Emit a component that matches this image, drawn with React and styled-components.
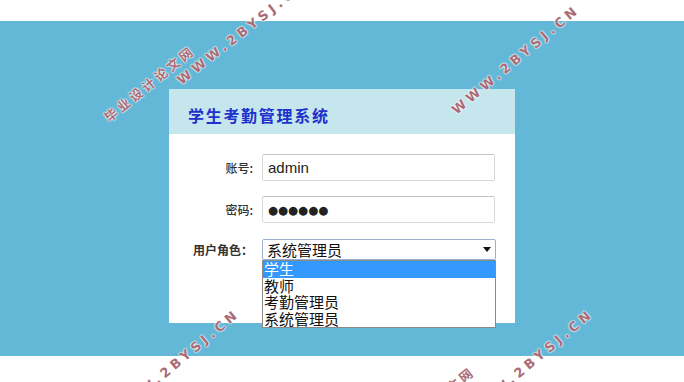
import React from 'react';
import styled, { createGlobalStyle } from 'styled-components';

const GlobalStyle = createGlobalStyle`
    html, body {
        margin: 0;
        padding: 0;
        background: #ffffff;
        font-family: "Liberation Sans", "Noto Sans CJK SC", sans-serif;
    }
`;

const roles = ['学生', '教师', '考勤管理员', '系统管理员'];

// watermark stamps, anchored at the left edge / vertical middle of the first glyph
const marks = [
    { text: '毕业设计论文网', x: 106, y: 119, deg: -39, cjk: true },
    { text: 'WWW.2BYSJ.CN', x: 179, y: 82, deg: -38 },
    { text: 'WWW.2BYSJ.CN', x: 454, y: 112, deg: -40 },
    { text: 'WWW.2BYSJ.CN', x: 114, y: 416, deg: -40 },
    { text: '毕业设计论文网', x: 386, y: 440, deg: -39, cjk: true },
    { text: 'WWW.2BYSJ.CN', x: 468, y: 416, deg: -40 },
];

function App() {
    return (
        <Page>
            <GlobalStyle />
            <Band>
                <Card>
                    <Header>
                        <Title>学生考勤管理系统</Title>
                    </Header>
                    <Form>
                        <Row>
                            <Label>账号:</Label>
                            <Input type="text" value="admin" readOnly />
                        </Row>
                        <Row>
                            <Label>密码:</Label>
                            <Input type="text" value="●●●●●●" readOnly $mask />
                        </Row>
                        <Row $top>
                            <Label $bold>用户角色：</Label>
                            <SelectWrap>
                                <SelectBox>
                                    <span>系统管理员</span>
                                    <Caret viewBox="0 0 8 5">
                                        <path d="M0 0 H8 L4 5 Z" fill="#111" />
                                    </Caret>
                                </SelectBox>
                                <ListBox>
                                    {roles.map((r, i) => (
                                        <Option key={r} $active={i === 0}>
                                            {r}
                                        </Option>
                                    ))}
                                </ListBox>
                            </SelectWrap>
                        </Row>
                    </Form>
                </Card>
            </Band>
            {marks.map((m, i) => (
                <Mark
                    key={i}
                    $cjk={m.cjk}
                    style={{ left: m.x, top: m.y - 8, transform: `rotate(${m.deg}deg)` }}
                >
                    {m.text}
                </Mark>
            ))}
        </Page>
    );
}
export default App;

const Page = styled.div`
    position: relative;
    width: 684px;
    height: 382px;
    overflow: hidden;
    padding-top: 21px;
    box-sizing: border-box;
`;

const Band = styled.div`
    height: 335px;
    background: #63b8d7;
    padding-top: 68px;
    box-sizing: border-box;
`;

const Card = styled.div`
    width: 346px;
    height: 234px;
    margin: 0 auto;
    background: #ffffff;
`;

const Header = styled.div`
    height: 45px;
    background: #c6e6ed;
    display: flex;
    align-items: center;
    padding: 7px 0 0 19px;
    box-sizing: border-box;
`;

const Title = styled.h1`
    margin: 0;
    font-family: "Noto Sans CJK SC", sans-serif;
    font-size: 16px;
    font-weight: 700;
    letter-spacing: 1.7px;
    color: #2030cc;
`;

const Form = styled.div`
    display: flex;
    flex-direction: column;
    gap: 15px;
    padding-top: 20px;
`;

const Row = styled.div`
    display: flex;
    align-items: ${(p) => (p.$top ? 'flex-start' : 'center')};
    height: 27px;
    padding-top: ${(p) => (p.$top ? '1px' : '0')};
`;

const Label = styled.label`
    width: 93px;
    text-align: right;
    padding-right: 9px;
    box-sizing: border-box;
    font-family: "Noto Sans CJK SC", sans-serif;
    font-size: 12px;
    line-height: 21px;
    font-weight: ${(p) => (p.$bold ? 700 : 500)};
    color: #333;
`;

const Input = styled.input`
    width: 233px;
    height: 27px;
    box-sizing: border-box;
    border: 1px solid #d8d8d8;
    border-top-color: #c4c4c4;
    border-radius: 2px;
    padding: 0 5px;
    font-family: ${(p) => (p.$mask ? '"DejaVu Sans", sans-serif' : '"Liberation Sans", sans-serif')};
    font-size: ${(p) => (p.$mask ? '11.5px' : '15px')};
    color: #222;
    outline: none;
`;

const SelectWrap = styled.div`
    position: relative;
    width: 234px;
`;

const SelectBox = styled.div`
    height: 21px;
    box-sizing: border-box;
    border: 1px solid #9bb0cf;
    border-radius: 2px;
    display: flex;
    align-items: center;
    justify-content: space-between;
    padding: 0 4px 0 4px;
    font-family: "Noto Sans CJK SC", sans-serif;
    font-size: 15px;
    color: #111;
    background: #fff;
`;

const Caret = styled.svg`
    width: 8px;
    height: 5px;
`;

const ListBox = styled.div`
    position: absolute;
    top: 21px;
    left: 0;
    width: 234px;
    box-sizing: border-box;
    border: 1px solid #8a8a8a;
    background: #fff;
    z-index: 2;
`;

const Option = styled.div`
    height: 16.5px;
    line-height: 16.5px;
    padding-left: 1px;
    font-family: "Noto Sans CJK SC", sans-serif;
    font-size: 15px;
    color: ${(p) => (p.$active ? '#ffffff' : '#111')};
    background: ${(p) => (p.$active ? '#3399ff' : 'transparent')};
`;

const Mark = styled.div`
    position: absolute;
    transform-origin: left center;
    font-family: ${(p) => (p.$cjk ? '"Noto Sans CJK SC", sans-serif' : '"DejaVu Sans", sans-serif')};
    font-weight: 700;
    font-size: 13px;
    letter-spacing: ${(p) => (p.$cjk ? '3px' : '4px')};
    line-height: 16px;
    color: #a96c76;
    text-shadow: 0 0 2px #fff, 0 0 2px #fff, 0 0 1px #fff;
    white-space: nowrap;
    pointer-events: none;
    z-index: 5;
`;
